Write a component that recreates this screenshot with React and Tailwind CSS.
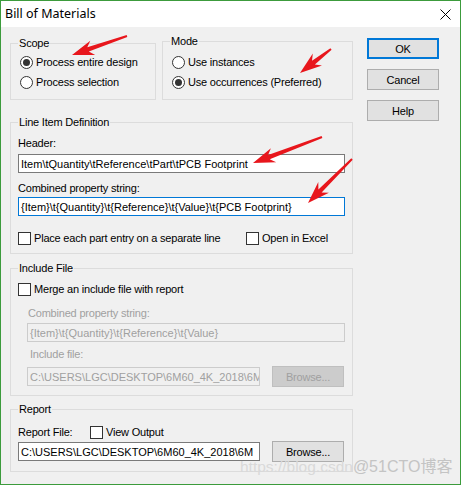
import React from 'react';

const ui = "font-['Liberation_Sans',Arial,sans-serif] text-[11px] tracking-[-0.2px] leading-[14px] text-black";

function Radio({ checked, label }) {
  return (
    <div className="flex items-center h-[20px] gap-[3px] ml-[2px]">
      <span className="w-[13px] h-[13px] rounded-full border border-[#333333] bg-white flex items-center justify-center">
        {checked && <span className="w-[7px] h-[7px] rounded-full bg-[#333333]" />}
      </span>
      <span>{label}</span>
    </div>
  );
}

function Check({ label }) {
  return (
    <div className="flex items-center h-[14px] gap-[3px]">
      <span className="w-[13px] h-[13px] border border-[#333333] bg-white" />
      <span>{label}</span>
    </div>
  );
}

function Group({ title, className, children }) {
  return (
    <fieldset className={"border border-[#dcdcdc] px-[7px] " + className}>
      <legend className="px-[1px] leading-[14px]">{title}</legend>
      {children}
    </fieldset>
  );
}

function Field({ text, focused, disabled, className }) {
  const border = focused ? 'border-[#0078d7]' : disabled ? 'border-[#cccccc]' : 'border-[#7a7a7a]';
  const bg = disabled ? 'bg-[#f0f0f0] text-[#a0a0a0]' : 'bg-white';
  return (
    <div className={`h-[19px] border ${border} ${bg} pl-[2px] flex items-center whitespace-nowrap overflow-hidden tracking-normal ${className}`}>
      {text}
    </div>
  );
}

function Button({ label, primary, disabled }) {
  const cls = primary
    ? 'border-2 border-[#0078d7] bg-[#e1e1e1]'
    : disabled
    ? 'border border-[#bfbfbf] bg-[#cccccc] text-[#a0a0a0]'
    : 'border border-[#adadad] bg-[#e1e1e1]';
  return (
    <div className={`w-[72px] h-[21px] flex items-center justify-center ${cls}`}>{label}</div>
  );
}

function arrowPoints([tx, ty], [hx, hy]) {
  const dx = hx - tx;
  const dy = hy - ty;
  const len = Math.hypot(dx, dy);
  const ux = dx / len;
  const uy = dy / len;
  const nx = -uy;
  const ny = ux;
  const L = 20;
  const w = 7.5;
  const bx = hx - ux * L;
  const by = hy - uy * L;
  const pts = [
    [tx + nx * 1, ty + ny * 1],
    [bx + ux * 3 + nx * 2.3, by + uy * 3 + ny * 2.3],
    [bx - ux * 2 + nx * w, by - uy * 2 + ny * w],
    [hx, hy],
    [bx - ux * 2 - nx * w, by - uy * 2 - ny * w],
    [bx + ux * 3 - nx * 2.3, by + uy * 3 - ny * 2.3],
    [tx - nx * 1, ty - ny * 1],
  ];
  return pts.map((p) => p.map((v) => v.toFixed(1)).join(',')).join(' ');
}

const arrows = [
  [[127, 36], [72, 55]],
  [[331, 49], [300, 73]],
  [[322, 137], [253, 163]],
  [[352, 159], [308, 203]],
];

export default function App() {
  return (
    <div className={`relative w-[461px] h-[485px] border border-[#3c9b3c] bg-[#f0f0f0] ${ui}`}>
      {/* title bar */}
      <div className="h-[26px] bg-white flex items-center justify-between pl-[4px] pr-[9px]">
        <span className="font-['Noto_Sans',Arial,sans-serif] text-[12.5px] tracking-normal">Bill of Materials</span>
        <svg width="11" height="11" viewBox="0 0 11 11">
          <path d="M0.5 0.5L10.5 10.5M10.5 0.5L0.5 10.5" stroke="#000" strokeWidth="1" />
        </svg>
      </div>

      <div className="flex pl-[9px]">
        <div className="w-[343px] flex flex-col">
          <div className="flex gap-[6px] pt-[7px]">
            <Group title="Scope" className="w-[146px] h-[64px] mt-[2px] pt-[2px]">
              <Radio checked label="Process entire design" />
              <Radio label="Process selection" />
            </Group>
            <Group title="Mode" className="w-[191px] h-[66px] pt-[4px]">
              <Radio label="Use instances" />
              <Radio checked label="Use occurrences (Preferred)" />
            </Group>
          </div>

          <Group title="Line Item Definition" className="h-[139px] mt-[15px]">
            <div className="mt-[7px]">Header:</div>
            <Field className="mt-[4px]" text={'Item\\tQuantity\\tReference\\tPart\\tPCB Footprint'} />
            <div className="mt-[8px]">Combined property string:</div>
            <Field className="mt-[2px]" focused text={'{Item}\\t{Quantity}\\t{Reference}\\t{Value}\\t{PCB Footprint}'} />
            <div className="flex mt-[15px]">
              <div className="w-[228px]">
                <Check label="Place each part entry on a separate line" />
              </div>
              <Check label="Open in Excel" />
            </div>
          </Group>

          <Group title="Include File" className="h-[135px] mt-[7px]">
            <div className="mt-[7px]">
              <Check label="Merge an include file with report" />
            </div>
            <div className="pl-[9px] text-[#a0a0a0]">
              <div className="mt-[10px] ml-[1px]">Combined property string:</div>
              <Field className="mt-[3px] w-[318px]" disabled text={'{Item}\\t{Quantity}\\t{Reference}\\t{Value}'} />
              <div className="mt-[5px] ml-[3px]">Include file:</div>
              <div className="flex items-center mt-[5px] gap-[12px]">
                <Field className="w-[233px]" disabled text={'C:\\USERS\\LGC\\DESKTOP\\6M60_4K_2018\\6M'} />
                <Button disabled label="Browse..." />
              </div>
            </div>
          </Group>

          <Group title="Report" className="h-[70px] mt-[6px]">
            <div className="flex items-center mt-[9px] h-[14px]">
              <div className="w-[72px]">Report File:</div>
              <Check label="View Output" />
            </div>
            <div className="flex items-center mt-[2px] gap-[12px]">
              <Field className="w-[242px]" text={'C:\\USERS\\LGC\\DESKTOP\\6M60_4K_2018\\6M'} />
              <Button label="Browse..." />
            </div>
          </Group>
        </div>

        <div className="ml-[14px] mt-[11px] flex flex-col gap-[10px]">
          <Button primary label="OK" />
          <Button label="Cancel" />
          <Button label="Help" />
        </div>
      </div>

      {/* watermark */}
      <div className="absolute left-[239px] top-[459px] flex items-baseline whitespace-nowrap pointer-events-none tracking-normal">
        <span className="text-[15.5px] text-[#d9d9d9]">https://blog.csdn</span>
        <span className="text-[16px] text-[#c4c4c4] font-['Liberation_Sans','Noto_Sans_CJK_SC',sans-serif]">@51CTO博客</span>
      </div>

      {/* red annotation arrows */}
      <svg className="absolute left-[-1px] top-[-1px] pointer-events-none" width="461" height="485">
        {arrows.map(([t, h], i) => (
          <polygon key={i} points={arrowPoints(t, h)} fill="#e8161c" />
        ))}
      </svg>
    </div>
  );
}
